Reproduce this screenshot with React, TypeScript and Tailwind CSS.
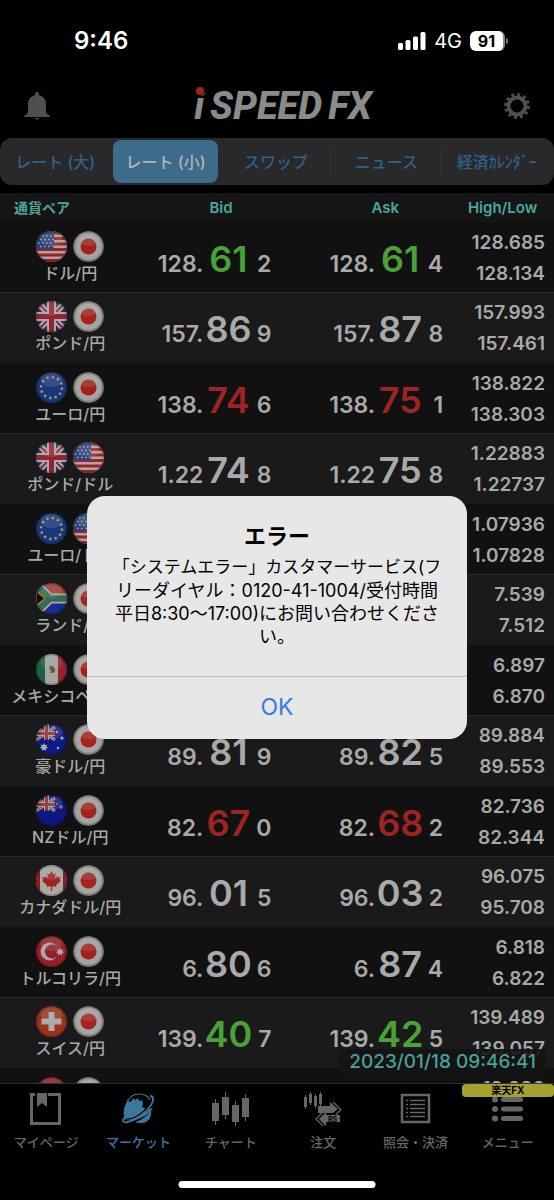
import React, { useState } from 'react';

type Flag = 'us' | 'jp' | 'gb' | 'eu' | 'za' | 'mx' | 'au' | 'nz' | 'ca' | 'tr' | 'ch' | 'hk';
type Tone = 'up' | 'down' | 'flat';
type Price = [string, string, string, Tone];

interface Pair {
  name: string;
  flags: [Flag, Flag];
  bid?: Price;
  ask?: Price;
  high: string;
  low: string;
}

const pairs: Pair[] = [
  { name: 'ドル/円', flags: ['us', 'jp'], bid: ['128.', '61', '2', 'up'], ask: ['128.', '61', '4', 'up'], high: '128.685', low: '128.134' },
  { name: 'ポンド/円', flags: ['gb', 'jp'], bid: ['157.', '86', '9', 'flat'], ask: ['157.', '87', '8', 'flat'], high: '157.993', low: '157.461' },
  { name: 'ユーロ/円', flags: ['eu', 'jp'], bid: ['138.', '74', '6', 'down'], ask: ['138.', '75', '1', 'down'], high: '138.822', low: '138.303' },
  { name: 'ポンド/ドル', flags: ['gb', 'us'], bid: ['1.22', '74', '8', 'flat'], ask: ['1.22', '75', '8', 'flat'], high: '1.22883', low: '1.22737' },
  { name: 'ユーロ/ドル', flags: ['eu', 'us'], high: '1.07936', low: '1.07828' },
  { name: 'ランド/円', flags: ['za', 'jp'], high: '7.539', low: '7.512' },
  { name: 'メキシコペソ/円', flags: ['mx', 'jp'], high: '6.897', low: '6.870' },
  { name: '豪ドル/円', flags: ['au', 'jp'], bid: ['89.', '81', '9', 'flat'], ask: ['89.', '82', '5', 'flat'], high: '89.884', low: '89.553' },
  { name: 'NZドル/円', flags: ['nz', 'jp'], bid: ['82.', '67', '0', 'down'], ask: ['82.', '68', '2', 'down'], high: '82.736', low: '82.344' },
  { name: 'カナダドル/円', flags: ['ca', 'jp'], bid: ['96.', '01', '5', 'flat'], ask: ['96.', '03', '2', 'flat'], high: '96.075', low: '95.708' },
  { name: 'トルコリラ/円', flags: ['tr', 'jp'], bid: ['6.', '80', '6', 'flat'], ask: ['6.', '87', '4', 'flat'], high: '6.818', low: '6.822' },
  { name: 'スイス/円', flags: ['ch', 'jp'], bid: ['139.', '40', '7', 'up'], ask: ['139.', '42', '5', 'up'], high: '139.489', low: '139.057' },
  { name: '', flags: ['hk', 'jp'], high: '18.980', low: '' },
];

const toneClass: Record<Tone, string> = {
  up: 'text-[#4aa236]',
  down: 'text-[#9d2422]',
  flat: 'text-[#a9a9a9]',
};

const UnionJack: React.FC = () => (
  <>
    <rect width="31" height="31" fill="#23408f" />
    <path d="M0 0 31 31M31 0 0 31" stroke="#e8e8e8" strokeWidth="6" />
    <path d="M0 0 31 31M31 0 0 31" stroke="#c8283c" strokeWidth="2" />
    <path d="M15.5 0V31M0 15.5H31" stroke="#e8e8e8" strokeWidth="9" />
    <path d="M15.5 0V31M0 15.5H31" stroke="#c8283c" strokeWidth="5" />
  </>
);

const SouthernFlag: React.FC<{ stars: React.ReactNode }> = ({ stars }) => (
  <>
    <rect width="31" height="31" fill="#0a1cb0" />
    <path d="M0 3 19 16M19 3 0 16" stroke="#ddd" strokeWidth="3" />
    <path d="M0 3 19 16M19 3 0 16" stroke="#c33" strokeWidth="1" />
    <path d="M10.5 0V16M0 9.5H19" stroke="#ddd" strokeWidth="5" />
    <path d="M10.5 0V16M0 9.5H19" stroke="#c33" strokeWidth="3" />
    {stars}
  </>
);

const star = 'm0-4 1 2.2 2.4-.8-1.1 2.2 2 1.4-2.4.5.1 2.5-2-1.6-2 1.6.1-2.5-2.4-.5 2-1.4-1.1-2.2 2.4.8z';

const flagArt: Record<Flag, React.ReactNode> = {
  jp: (
    <>
      <circle cx="15.5" cy="15.5" r="15.5" fill="#c0c0bc" />
      <circle cx="15.5" cy="15.5" r="13" fill="#e2e2df" />
      <circle cx="15.5" cy="15.5" r="8" fill="#e02a20" />
    </>
  ),
  us: (
    <>
      <rect width="31" height="31" fill="#e6e6e6" />
      <path d="M0 2H31M0 7.5H31M0 13H31M0 18.5H31M0 24H31M0 29.5H31" stroke="#d8282c" strokeWidth="2.8" />
      <rect width="18" height="18" fill="#2f55a8" />
      <path d="M2 5H18M4 8.5H18M2 12H18M4 15.5H18" stroke="#e6e6e6" strokeWidth="1.6" strokeDasharray="1.6 2.4" />
    </>
  ),
  gb: <UnionJack />,
  eu: (
    <>
      <rect width="31" height="31" fill="#1c48ad" />
      <circle cx="15.5" cy="15.5" r="10.5" fill="none" stroke="#e8e060" strokeWidth="2.4" strokeDasharray="2.2 3.298" />
    </>
  ),
  za: (
    <>
      <rect width="31" height="16" fill="#d84a3c" />
      <rect y="16" width="31" height="15" fill="#1c35c8" />
      <path d="M0 2 14 15.5H31M0 29 14 15.5" fill="none" stroke="#e6e6e6" strokeWidth="10" />
      <path d="M0 2 14 15.5H31M0 29 14 15.5" fill="none" stroke="#3d8f6a" strokeWidth="6.5" />
      <path d="M0 8 9 15.5 0 23z" fill="#0b0b0b" stroke="#d8a030" strokeWidth="1.5" />
    </>
  ),
  mx: (
    <>
      <rect width="9" height="31" fill="#218656" />
      <rect x="9" width="13" height="31" fill="#e4e4e0" />
      <rect x="22" width="9" height="31" fill="#d02838" />
      <path d="M13 13c3-3 6 0 6 3s-4 4-6 2c3 0 3-2 1-2z" fill="#7d7050" />
    </>
  ),
  au: (
    <SouthernFlag
      stars={
        <g fill="#eee">
          <path transform="translate(8 23)" d={star} />
          <circle cx="26" cy="14" r="1.6" />
          <circle cx="21" cy="8" r="1.2" />
          <circle cx="22" cy="24" r="1.2" />
        </g>
      }
    />
  ),
  nz: <SouthernFlag stars={<path d="M25 10v4M23 12h4M21 8v2" stroke="#c99" strokeWidth="1.6" />} />,
  ca: (
    <>
      <rect width="31" height="31" fill="#e4e4e0" />
      <path d="M0 0H4V31H0zM27 0h4v31h-4z" fill="#c81e1e" />
      <path
        d="m15.5 6 1.9 3.4 2.3-1-.9 4.8 2.500-2.300.7 1.600 2.700-.5-1.100 3.100 1.300.8-4.900 4.100.6 1.800-4.500-.6V26h-1.200v-4.800l-4.500.6.6-1.800-4.900-4.100 1.300-.8-1.100-3.100 2.700.5.7-1.600 2.500 2.300-.9-4.800 2.300 1z"
        fill="#d82820"
      />
    </>
  ),
  tr: (
    <>
      <rect width="31" height="31" fill="#d02434" />
      <circle cx="13.5" cy="15.5" r="9" fill="#e8e8e8" />
      <circle cx="16" cy="15.5" r="7" fill="#d02434" />
      <path transform="translate(24 15.5)" d={star} fill="#e8e8e8" />
    </>
  ),
  ch: (
    <>
      <rect width="31" height="31" fill="#cf3e1c" />
      <path d="M12.5 6h6v6.5h7v6h-7V25h-6v-6.500h-7v-6h7z" fill="#e8e8e8" />
    </>
  ),
  hk: <rect width="31" height="31" fill="#d02434" />,
};

const FlagBadge: React.FC<{ code: Flag }> = ({ code }) => (
  <span className="block size-[31px] overflow-hidden rounded-full opacity-70">
    <svg viewBox="0 0 31 31" className="block size-full">
      {flagArt[code]}
      <ellipse cx="15.5" cy="8" rx="11" ry="7" fill="#fff" opacity=".18" />
      <circle cx="15.5" cy="15.5" r="14.8" fill="none" stroke="#000" strokeWidth="1.5" opacity=".2" />
    </svg>
  </span>
);

const PriceCell: React.FC<{ price?: Price }> = ({ price }) => (
  <td className="p-0 pt-2">
    {price && (
      <div className="flex items-baseline justify-end font-semibold text-[#a9a9a9]">
        <span className="text-[23px] leading-9">{price[0]}</span>
        <span className={`w-[50px] text-center text-[36px] leading-9 ${toneClass[price[3]]}`}>{price[1]}</span>
        <span className="w-[18px] text-right text-[23px] leading-9">{price[2]}</span>
      </div>
    )}
  </td>
);

const BookmarkIcon = () => (
  <svg viewBox="0 0 34 34" className="size-[34px]" fill="currentColor">
    <path d="M1 1h5v3H4v26h25V4H19V1h13v32H1z" />
    <path d="M8 1h10v14l-5-4-5 4z" />
  </svg>
);

const GlobeIcon = () => (
  <svg viewBox="0 0 34 34" className="size-[34px]" fill="currentColor">
    <path d="M3 24C2 17 4 12 8 9l2 1 2-4 2 2 3-2 1 3 3-1 1 4-1 3 3 1-1 3 3 1 2-3 4-1c-4 6-11 10-18 12-4 1-7 1-11-1z" />
    <path d="M14 30c7-2 12-6 16-12 1 7-3 13-9 13-3 0-5 0-7-1z" />
    <path d="M5 13C7 6 12 2 18 2c5 0 9 2 11 6" fill="none" stroke="currentColor" strokeWidth="1.2" />
    <path d="M29 4c4 0 4 4 1 9C25 21 15 28 7 30c-5 1-6-1-4-4" fill="none" stroke="currentColor" strokeWidth="1.8" />
    <path d="M5 27c7 1 18-6 24-15 1-2 1-3 1-5" fill="none" stroke="#000" strokeWidth="1.2" />
  </svg>
);

const ChartIcon = () => (
  <svg viewBox="0 0 38 34" className="h-[34px] w-[38px]" fill="currentColor">
    <path d="M0 11h7v18H0zM10 5h7v18h-7zM20 13h7v17h-7zM30 6h7v19h-7z" />
    <path d="M3 7h1v26H3zM13 0h1v27h-1zM23 9h1v25h-1zM33 2h1v27h-1z" />
  </svg>
);

const OrderIcon = () => (
  <svg viewBox="0 0 38 34" className="h-[34px] w-[38px]" fill="currentColor">
    <path d="M0 5h3v10H0zM5 2h3v9H5zM10 4h3v10h-3zM15 2h3v10h-3z" />
    <path d="M1 3h1v14H1zM6 0h1v13H6zM11 2h1v14h-1zM16 0h1v14h-1z" />
    <path d="M14 14h12v-4l8 7-5 4H14z" />
    <path d="m29 10 8 7.5-5 5" fill="none" stroke="currentColor" strokeWidth="1.2" />
    <path d="M36 23v7H22v4l-7-7 7-7v3z" />
    <path d="m19 20-7 7 7 7" fill="none" stroke="currentColor" strokeWidth="1.2" />
    <text x="24" y="29.5" fontSize="7" fontWeight="700" fontFamily="Inter" fill="#000">RS</text>
  </svg>
);

const ListIcon = () => (
  <svg viewBox="0 0 34 34" className="size-[34px]" fill="none" stroke="currentColor">
    <rect x="4" y="3" width="27" height="27" strokeWidth="2.5" />
    <path d="M8 8.5h2M8 12.5h2M8 16.5h2M8 20.5h2M8 24.5h2M12 8.5h15M12 12.5h15M12 16.5h15M12 20.5h15M12 24.5h15" strokeWidth="1.4" />
  </svg>
);

const MenuIcon = () => (
  <svg viewBox="0 0 34 34" className="size-[34px]" fill="currentColor">
    <circle cx="4" cy="7.5" r="3" />
    <circle cx="4" cy="17" r="3" />
    <circle cx="4" cy="26.5" r="3" />
    <path d="M12.5 7.5h17M12.5 17h17M12.5 26.5h17" stroke="currentColor" strokeWidth="5" strokeLinecap="round" />
  </svg>
);

const navItems = [
  { label: 'マイページ', Icon: BookmarkIcon },
  { label: 'マーケット', Icon: GlobeIcon, active: true },
  { label: 'チャート', Icon: ChartIcon },
  { label: '注文', Icon: OrderIcon },
  { label: '照会・決済', Icon: ListIcon },
  { label: 'メニュー', Icon: MenuIcon, badge: '楽天FX' },
];

const tabs = ['レート (大)', 'レート (小)', 'スワップ', 'ニュース', '経済ｶﾚﾝﾀﾞｰ'];

const StatusBar: React.FC = () => (
  <div className="flex h-[82px] shrink-0 items-center justify-between pl-[74px] pr-[46px] text-white">
    <span className="text-2xl font-semibold">9:46</span>
    <div className="flex items-center gap-2">
      <svg viewBox="0 0 28 18" className="h-[18px] w-[28px]" fill="currentColor">
        <rect y="11" width="5" height="7" rx="1.5" />
        <rect x="7.5" y="8" width="5" height="10" rx="1.5" />
        <rect x="15" y="4.5" width="5" height="13.5" rx="1.5" />
        <rect x="22.5" width="5" height="18" rx="1.5" />
      </svg>
      <span className="text-xl">4G</span>
      <div className="flex items-center gap-px">
        <span className="flex h-5 w-[35px] items-center justify-center rounded-md border-r-2 border-[#888] bg-white text-base font-bold text-black">91</span>
        <span className="h-1.5 w-0.5 rounded-r-full bg-[#777]" />
      </div>
    </div>
  </div>
);

const Header: React.FC = () => (
  <header className="flex h-12 shrink-0 items-center justify-between px-6 text-[#4f4f4f]">
    <button type="button" aria-label="お知らせ">
      <svg viewBox="0 0 26 30" className="h-[30px] w-[26px]" fill="currentColor">
        <path d="M13 1c1.3 0 2 .8 2 2v1.2c4.5 1 7 4.3 7 9.3v7c0 2 1.5 3 4 4.5v1H0v-1c2.5-1.5 4-2.5 4-4.5v-7c0-5 2.5-8.3 7-9.3V3c0-1.2.7-2 2-2zM11 27h4.5c-.3 2-4.2 2-4.5 0z" />
      </svg>
    </button>
    <h1 className="flex items-baseline gap-1.5 pl-3 font-['Roboto',sans-serif] text-[38px] font-extrabold italic leading-none text-[#8b8b8b]">
      <span className="relative">
        i
        <span className="absolute right-0 top-0 size-2 rounded-full bg-[#a3221b] ring-1 ring-black" />
      </span>
      <span>SPEED</span>
      <span>FX</span>
    </h1>
    <button type="button" aria-label="設定">
      <svg viewBox="0 0 26 26" className="size-[26px]" fill="none" stroke="currentColor">
        <circle cx="13" cy="13" r="8.5" strokeWidth="4" />
        <circle cx="13" cy="13" r="11.5" strokeWidth="3" strokeDasharray="2.9 3.122" />
      </svg>
    </button>
  </header>
);

const RateTable: React.FC = () => (
  <table className="w-full table-fixed border-collapse">
    <thead>
      <tr className="h-[29px] bg-[#151515] text-[15px] font-semibold text-[#4ba69f]">
        <th className="w-[25%] p-0 pl-3.5 text-left text-[14px] font-semibold">通貨ペア</th>
        <th className="w-[24%] p-0 pl-8 pt-0.5 font-semibold">Bid</th>
        <th className="w-[31%] p-0 pl-14 pt-0.5 font-semibold">Ask</th>
        <th className="w-[20%] p-0 pl-2 pt-0.5 font-semibold">High/Low</th>
      </tr>
    </thead>
    <tbody>
      {pairs.map((pair, i) => (
        <tr key={i} className="h-[70px] bg-[#111] even:h-[71px] even:bg-[#1a1a1a] even:shadow-[inset_0_1px_0_#292929]">
          <td className="p-0 pl-0.5 pt-[9px] align-top">
            <div className="flex justify-center gap-1.5">
              <FlagBadge code={pair.flags[0]} />
              <FlagBadge code={pair.flags[1]} />
            </div>
            <div className="whitespace-nowrap text-center text-[16px] font-medium leading-[23px] text-[#a9a9a9]">{pair.name}</div>
          </td>
          <PriceCell price={pair.bid} />
          <PriceCell price={pair.ask} />
          <td className="p-0 pr-[9px] text-right align-top text-[19px] font-semibold leading-[31px] text-[#a9a9a9]">
            <div className="pt-[5px]">{pair.high}</div>
            <div>{pair.low}</div>
          </td>
        </tr>
      ))}
    </tbody>
  </table>
);

const App: React.FC = () => {
  const [activeTab, setActiveTab] = useState(1);
  const [isErrorOpen, setIsErrorOpen] = useState(true);

  return (
    <div className="relative flex h-screen flex-col overflow-hidden bg-black font-['Inter','Noto_Sans_CJK_JP',sans-serif]">
      <StatusBar />
      <Header />

      <div className="my-2 flex h-[47px] shrink-0 rounded-xl bg-[#29292b] py-[2px] pr-0.5">
        {tabs.map((tab, i) => (
          <button
            key={tab}
            type="button"
            onClick={() => setActiveTab(i)}
            className={`relative mx-[3px] flex-1 whitespace-nowrap rounded-lg text-[16px] font-medium ${
              i === activeTab ? 'bg-[#3d6c8b] text-[#b4b4b4]' : 'text-[#2f618a]'
            }`}
          >
            {tab}
            {i > 2 && <span className="absolute -left-1 top-2 h-7 w-px bg-[#343436]" />}
          </button>
        ))}
      </div>

      <main className="relative min-h-0 flex-1 overflow-hidden">
        <RateTable />
        <div className="absolute bottom-2 right-2 rounded bg-[#141414]/90 px-2.5 text-[19px] font-medium leading-[26px] text-[#4ba09c]">
          2023/01/18 09:46:41
        </div>
      </main>

      <nav className="grid h-[117px] shrink-0 grid-cols-6 items-start border-t border-[#303030]">
        {navItems.map(({ label, Icon, active, badge }) => (
          <a
            key={label}
            href="#"
            className={`relative flex flex-col items-center gap-1.5 pt-2 ${active ? 'text-[#3a78a0]' : 'text-[#666]'}`}
          >
            <Icon />
            <span className="whitespace-nowrap text-[13px] font-medium leading-5">{label}</span>
            {badge && (
              <span className="absolute inset-x-0 top-0 rounded-sm bg-[#a5a12c] text-center text-[10px] font-bold leading-[13px] text-black">
                {badge}
              </span>
            )}
          </a>
        ))}
      </nav>
      <div className="absolute bottom-3 left-1/2 h-[7px] w-[197px] -translate-x-1/2 rounded-full bg-white" />

      {/* Error dialog */}
      {isErrorOpen && (
        <div className="absolute inset-0 flex items-center justify-center pt-[34px]">
          <div role="alertdialog" aria-labelledby="error-title" className="w-[380px] overflow-hidden rounded-[18px] bg-[#e7e7e7] text-center text-black">
            <div className="px-4 pb-7 pt-6">
              <h2 id="error-title" className="pb-1 text-[22px] font-bold leading-8">エラー</h2>
              <p className="flex flex-col items-center whitespace-nowrap text-[18px] leading-[23px]">
                <span className="text-[17px]">「システムエラー」カスタマーサービス(フ</span>
                <span>リーダイヤル：0120-41-1004/受付時間</span>
                <span>平日8:30〜17:00)にお問い合わせくださ</span>
                <span>い。</span>
              </p>
            </div>
            <button
              type="button"
              onClick={() => setIsErrorOpen(false)}
              className="h-[63px] w-full border-t border-[#bdbdbd] text-[23px] text-[#3b78e7]"
            >
              OK
            </button>
          </div>
        </div>
      )}
    </div>
  );
};

export default App;
